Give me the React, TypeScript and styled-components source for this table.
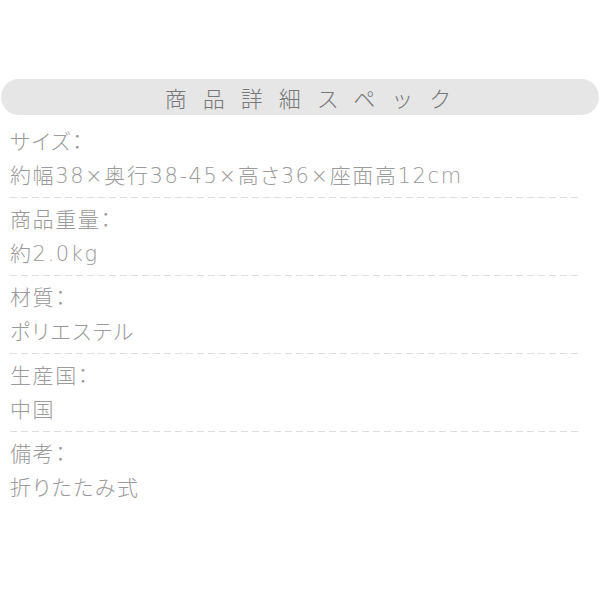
import styled, { createGlobalStyle } from 'styled-components'

const GlobalStyle = createGlobalStyle`
  body {
    margin: 0;
    background: #fff;
    font-family: "DejaVu Sans", "Noto Sans CJK JP", sans-serif;
  }
`

const Page = styled.div`
  width: 600px;
  height: 600px;
  padding-top: 79px;
  box-sizing: border-box;
`

const Heading = styled.div`
  margin: 0 1px;
  height: 36px;
  border-radius: 18px;
  background: #e6e6e6;
  display: flex;
  align-items: center;
  justify-content: center;
  font-family: "Noto Sans CJK JP", sans-serif;
  font-size: 22px;
  font-weight: 300;
  color: #787878;
  letter-spacing: 16px;
  padding-left: 32px;
`

const SpecList = styled.div`
  padding: 10px 18px 0 10px;
`

const SpecRow = styled.div<{ $last?: boolean }>`
  position: relative;
  padding-bottom: 5px;
  margin-bottom: 5px;

  &::after {
    content: '';
    position: absolute;
    left: 0;
    right: 0;
    bottom: 0;
    height: 1px;
    background: ${(p) =>
      p.$last ? 'transparent' : 'repeating-linear-gradient(to right, #dedede 0 7px, transparent 7px 11px)'};
  }
`

const Line = styled.div`
  font-size: 21px;
  font-weight: 200;
  line-height: 34px;
  letter-spacing: 1.6px;
  font-feature-settings: 'palt';
  color: #9a9a9a;
  white-space: nowrap;
`

const specs = [
  { label: 'サイズ：', value: '約幅38×奥行38-45×高さ36×座面高12cm' },
  { label: '商品重量：', value: '約2.0kg' },
  { label: '材質：', value: 'ポリエステル' },
  { label: '生産国：', value: '中国' },
  { label: '備考：', value: '折りたたみ式' },
]

export default function App() {
  return (
    <Page>
      <GlobalStyle />
      <Heading>商品詳細スペック</Heading>
      <SpecList>
        {specs.map((s, i) => (
          <SpecRow key={s.label} $last={i === specs.length - 1}>
            <Line>{s.label}</Line>
            <Line>{s.value}</Line>
          </SpecRow>
        ))}
      </SpecList>
    </Page>
  )
}
